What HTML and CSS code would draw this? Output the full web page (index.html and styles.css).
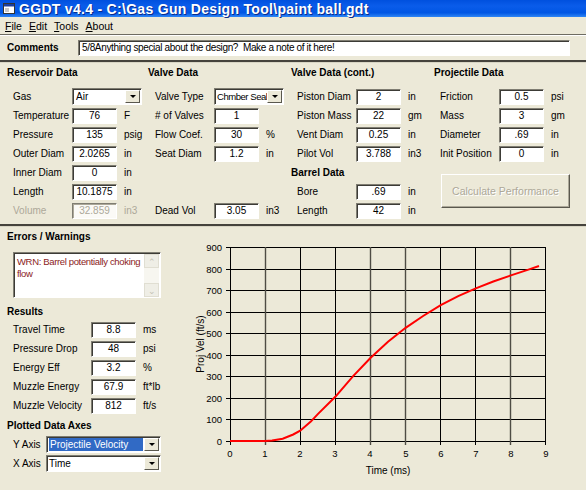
FILE: index.html
```html
<!DOCTYPE html>
<html lang="en">

<head>
    <meta charset="UTF-8">
    <title>GGDT v4.4 - C:\Gas Gun Design Tool\paint ball.gdt</title>
    <link rel="stylesheet" href="styles.css">
</head>

<body>
    <div class="titlebar">
        <svg class="title-icon" width="12" height="11" viewBox="0 0 12 11">
            <rect x="0.5" y="0.5" width="11" height="10" fill="#fff" stroke="#333"/>
            <rect x="1" y="1" width="10" height="2.5" fill="#1c3f9c"/>
            <rect x="2" y="5" width="4" height="4" fill="#c8c8c8"/>
        </svg>
        <span>GGDT v4.4 - C:\Gas Gun Design Tool\paint ball.gdt</span>
    </div>

    <div class="menubar">
        <span><u>F</u>ile</span>
        <span><u>E</u>dit</span>
        <span><u>T</u>ools</span>
        <span><u>A</u>bout</span>
    </div>
    <div class="sep"></div>

    <div class="comments">
        <span class="heading">Comments</span>
        <div class="comment-box">5/8Anything special about the design?  Make a note of it here!</div>
    </div>
    <div class="sep thick"></div>

    <div class="data">
        <!-- Reservoir -->
        <div class="group">
            <div class="heading">Reservoir Data</div>
            <div class="row"><span class="label">Gas</span><div class="select gas-select">Air<span class="drop"></span></div></div>
            <div class="row"><span class="label">Temperature</span><div class="box">76</div><span class="unit">F</span></div>
            <div class="row"><span class="label">Pressure</span><div class="box">135</div><span class="unit">psig</span></div>
            <div class="row"><span class="label">Outer Diam</span><div class="box">2.0265</div><span class="unit">in</span></div>
            <div class="row"><span class="label">Inner Diam</span><div class="box">0</div><span class="unit">in</span></div>
            <div class="row"><span class="label">Length</span><div class="box">10.1875</div><span class="unit">in</span></div>
            <div class="row disabled"><span class="label">Volume</span><div class="box">32.859</div><span class="unit">in3</span></div>
        </div>

        <!-- Valve -->
        <div class="group">
            <div class="heading">Valve Data</div>
            <div class="row"><span class="label">Valve Type</span><div class="select valve-select">Chmber Seal<span class="drop"></span></div></div>
            <div class="row"><span class="label"># of Valves</span><div class="box">1</div></div>
            <div class="row"><span class="label">Flow Coef.</span><div class="box">30</div><span class="unit">%</span></div>
            <div class="row"><span class="label">Seat Diam</span><div class="box">1.2</div><span class="unit">in</span></div>
            <div class="row last-row"><span class="label">Dead Vol</span><div class="box">3.05</div><span class="unit">in3</span></div>
        </div>

        <!-- Valve cont. / Barrel -->
        <div class="group">
            <div class="heading">Valve Data (cont.)</div>
            <div class="row"><span class="label">Piston Diam</span><div class="box">2</div><span class="unit">in</span></div>
            <div class="row"><span class="label">Piston Mass</span><div class="box">22</div><span class="unit">gm</span></div>
            <div class="row"><span class="label">Vent Diam</span><div class="box">0.25</div><span class="unit">in</span></div>
            <div class="row"><span class="label">Pilot Vol</span><div class="box">3.788</div><span class="unit">in3</span></div>
            <div class="heading sub">Barrel Data</div>
            <div class="row"><span class="label">Bore</span><div class="box">.69</div><span class="unit">in</span></div>
            <div class="row"><span class="label">Length</span><div class="box">42</div><span class="unit">in</span></div>
        </div>

        <!-- Projectile -->
        <div class="group">
            <div class="heading">Projectile Data</div>
            <div class="row"><span class="label">Friction</span><div class="box">0.5</div><span class="unit">psi</span></div>
            <div class="row"><span class="label">Mass</span><div class="box">3</div><span class="unit">gm</span></div>
            <div class="row"><span class="label">Diameter</span><div class="box">.69</div><span class="unit">in</span></div>
            <div class="row"><span class="label">Init Position</span><div class="box">0</div><span class="unit">in</span></div>
            <div class="calc-btn">Calculate Performance</div>
        </div>
    </div>
    <div class="sep thick"></div>

    <div class="bottom">
        <div class="side">
            <div class="heading">Errors / Warnings</div>
            <div class="msgbox">
                <div class="msg">WRN: Barrel potentially choking flow</div>
                <div class="scroll">
                    <span class="arrow">&#8963;</span>
                    <span class="arrow">&#8964;</span>
                </div>
            </div>

            <div class="heading results-head">Results</div>
            <div class="results">
                <div class="row"><span class="label">Travel Time</span><div class="box">8.8</div><span class="unit">ms</span></div>
                <div class="row"><span class="label">Pressure Drop</span><div class="box">48</div><span class="unit">psi</span></div>
                <div class="row"><span class="label">Energy Eff</span><div class="box">3.2</div><span class="unit">%</span></div>
                <div class="row"><span class="label">Muzzle Energy</span><div class="box">67.9</div><span class="unit">ft*lb</span></div>
                <div class="row"><span class="label">Muzzle Velocity</span><div class="box">812</div><span class="unit">ft/s</span></div>
            </div>

            <div class="heading axes-head">Plotted Data Axes</div>
            <div class="axes">
                <div class="row"><span class="label">Y Axis</span><div class="select axis-select"><span class="picked">Projectile Velocity</span><span class="drop"></span></div></div>
                <div class="row"><span class="label">X Axis</span><div class="select axis-select">Time<span class="drop"></span></div></div>
            </div>
        </div>

        <svg class="chart" width="396" height="265" viewBox="0 0 396 265">
            <g stroke="#000" stroke-width="1">
                <line x1="36" y1="20.5" x2="356" y2="20.5"/>
                <line x1="36" y1="42.5" x2="356" y2="42.5"/>
                <line x1="36" y1="63.5" x2="356" y2="63.5"/>
                <line x1="36" y1="85.5" x2="356" y2="85.5"/>
                <line x1="36" y1="106.5" x2="356" y2="106.5"/>
                <line x1="36" y1="128.5" x2="356" y2="128.5"/>
                <line x1="36" y1="149.5" x2="356" y2="149.5"/>
                <line x1="36" y1="171.5" x2="356" y2="171.5"/>
                <line x1="36" y1="192.5" x2="356" y2="192.5"/>
                <line x1="36" y1="214.5" x2="356" y2="214.5"/>
            </g>
            <g stroke="#000" stroke-width="1">
                <line x1="40.5" y1="20" x2="40.5" y2="218"/>
                <line x1="110.5" y1="20" x2="110.5" y2="218"/>
                <line x1="145.5" y1="20" x2="145.5" y2="218"/>
                <line x1="250.5" y1="20" x2="250.5" y2="218"/>
                <line x1="285.5" y1="20" x2="285.5" y2="218"/>
                <line x1="355.5" y1="20" x2="355.5" y2="218"/>
            </g>
            <!-- these columns render a little greyer in the original -->
            <g stroke="#4e4c44" stroke-width="1.4">
                <line x1="75.5" y1="20" x2="75.5" y2="218"/>
                <line x1="180.5" y1="20" x2="180.5" y2="218"/>
                <line x1="215.5" y1="20" x2="215.5" y2="218"/>
                <line x1="320.5" y1="20" x2="320.5" y2="218"/>
            </g>
            <g text-anchor="end">
                <text x="32" y="24">900</text>
                <text x="32" y="46">800</text>
                <text x="32" y="67">700</text>
                <text x="32" y="89">600</text>
                <text x="32" y="110">500</text>
                <text x="32" y="132">400</text>
                <text x="32" y="153">300</text>
                <text x="32" y="175">200</text>
                <text x="32" y="196">100</text>
                <text x="32" y="218">0</text>
            </g>
            <g text-anchor="middle">
                <text x="40" y="230">0</text>
                <text x="75" y="230">1</text>
                <text x="110" y="230">2</text>
                <text x="145" y="230">3</text>
                <text x="180" y="230">4</text>
                <text x="216" y="230">5</text>
                <text x="251" y="230">6</text>
                <text x="286" y="230">7</text>
                <text x="321" y="230">8</text>
                <text x="356" y="230">9</text>
            </g>
            <text class="axis-title" x="198" y="247" text-anchor="middle">Time (ms)</text>
            <text class="axis-title" x="14" y="117" text-anchor="middle" transform="rotate(-90 14 117)">Proj Vel (ft/s)</text>
            <path fill="none" stroke="#f00" stroke-width="2"
                  d="M40,214 L75.1,214 L82.1,213.6 L92.7,211.8 L103.2,207.5 L110.2,203.7 L120.8,194.6 L127.8,187.1 L145.3,169.8 L162.9,149.3 L180.4,131 L198,114.8 L215.6,100.8 L233.1,89 L250.7,78.2 L268.2,69.1 L285.8,61.4 L303.3,54.5 L320.9,48.4 L338.4,42.6 L349,39"/>
        </svg>
    </div>
</body>

</html>
```

FILE: styles.css
```css
* {
    box-sizing: border-box;
}

body {
    margin: 0;
    width: 586px;
    height: 490px;
    overflow: hidden;
    background: #ece9d8;
    font-family: 'Liberation Sans', Arial, sans-serif;
    font-size: 10px;
    color: #000;
}

/* window chrome */

.titlebar {
    height: 17px;
    display: flex;
    align-items: center;
    gap: 4px;
    padding-left: 3px;
    background: linear-gradient(to bottom, #0050de 0%, #0a5cea 35%, #0056e4 75%, #2f86f5 100%);
    color: #fff;
    font-weight: bold;
    font-size: 14px;
    letter-spacing: 0.3px;
    text-shadow: 1px 1px #0b2c8c;
    white-space: pre;
}

.menubar {
    height: 17px;
    display: flex;
    align-items: center;
    gap: 7px;
    padding-left: 5px;
    font-size: 10.5px;
}

.sep {
    height: 2px;
    background: #6e6c62;
    border-bottom: 1px solid #fff;
}

.sep.thick {
    height: 3px;
    background: #45433c;
    border-bottom: 1px solid #d8d5c4;
}

.heading {
    font-weight: bold;
    font-size: 10px;
    line-height: 16px;
}

/* fields */

.box,
.comment-box {
    width: 45px;
    height: 16px;
    line-height: 14px;
    background: #fff;
    border: 1px solid;
    border-color: #7f7d72 #fff #fff #7f7d72;
    box-shadow: inset 1px 1px #3c3b36;
    text-align: center;
    white-space: nowrap;
    overflow: hidden;
}

.select {
    position: relative;
    height: 17px;
    line-height: 15px;
    background: #fff;
    border: 1px solid;
    border-color: #7f7d72 #fff #fff #7f7d72;
    box-shadow: inset 1px 1px #3c3b36;
    padding-left: 3px;
    white-space: nowrap;
    overflow: hidden;
}

.drop {
    position: absolute;
    right: 1px;
    top: 1px;
    width: 15px;
    height: 13px;
    background: #ece9d8;
    border: 1px solid;
    border-color: #fff #5a584e #5a584e #fff;
}

.drop::after {
    content: "";
    position: absolute;
    left: 4px;
    top: 4px;
    border-left: 3px solid transparent;
    border-right: 3px solid transparent;
    border-top: 3px solid #000;
}

.gas-select {
    width: 70px;
}

.valve-select {
    width: 70px;
    padding-left: 2px;
    font-size: 9.5px;
    letter-spacing: -0.45px;
}

.axis-select {
    width: 115px;
    padding-left: 2px;
}

.picked {
    display: block;
    margin-top: 1px;
    width: 94px;
    height: 13px;
    line-height: 13px;
    padding-left: 1px;
    background: #316ac5;
    color: #fff;
}

/* comments row */

.comments {
    height: 24px;
    display: flex;
    align-items: center;
    padding-left: 7px;
}

.comments .heading {
    width: 71px;
}

.comment-box {
    width: 492px;
    text-align: left;
    padding-left: 3px;
    white-space: pre;
    letter-spacing: -0.35px;
}

.row {
    height: 19px;
    display: flex;
    align-items: center;
    padding-left: 6px;
}

.label {
    width: 59px;
    flex-shrink: 0;
    white-space: nowrap;
}

.unit {
    margin-left: 7px;
}

.disabled {
    color: #aca899;
}

.disabled .box {
    color: #aca899;
    background: #fbfaf6;
    box-shadow: inset 1px 1px #aca899;
}

/* data grid */

.data {
    display: grid;
    grid-template-columns: 141px 143px 143px 1fr;
    padding: 2px 0 4px 7px;
}

.group {
    display: grid;
    grid-template-rows: 22px repeat(7, 19px);
    align-content: start;
}

.group:nth-child(2) .row {
    padding-left: 7px;
}

.last-row {
    grid-row: 8;
}

.heading.sub {
    line-height: 19px;
}

.calc-btn {
    grid-row: 6 / span 3;
    margin: 11px 16px 12px 7px;
    display: flex;
    align-items: center;
    justify-content: center;
    border: 1px solid;
    border-color: #fff #5a584e #5a584e #fff;
    box-shadow: inset -1px -1px #aca899;
    color: #aca899;
    text-shadow: 1px 1px #fff;
    font-size: 10.5px;
}

/* bottom half */

.bottom {
    display: flex;
}

.side {
    width: 190px;
    padding: 2px 0 0 7px;
}

.msgbox {
    display: flex;
    margin: 7px 0 0 6px;
    width: 148px;
    height: 46px;
    background: #fff;
    border: 1px solid;
    border-color: #7f7d72 #fff #fff #7f7d72;
    box-shadow: inset 1px 1px #3c3b36;
}

.msg {
    flex: 1;
    padding: 3px 0 0 3px;
    color: #8b1c1c;
    font-size: 9.5px;
    letter-spacing: -0.35px;
    line-height: 12px;
}

.scroll {
    width: 15px;
    flex-shrink: 0;
    margin: 1px 1px 0 0;
    display: flex;
    flex-direction: column;
    justify-content: space-between;
    background: #f7f6f0;
}

.arrow {
    height: 14px;
    line-height: 14px;
    text-align: center;
    color: #c4c2b4;
    background: #efeee6;
    border: 1px solid #e0ded2;
    font-size: 9px;
}

.results-head {
    margin-top: 6px;
}

.results .label {
    width: 78px;
}

.axes-head {
    margin-top: 3px;
}

.axes {
    margin-top: 1px;
}

.axes .label {
    width: 33px;
}

/* chart */

.chart {
    display: block;
}

.chart text {
    font-family: 'Liberation Sans', Arial, sans-serif;
    font-size: 9.5px;
    fill: #000;
}

.chart .axis-title {
    font-size: 10px;
}
```
